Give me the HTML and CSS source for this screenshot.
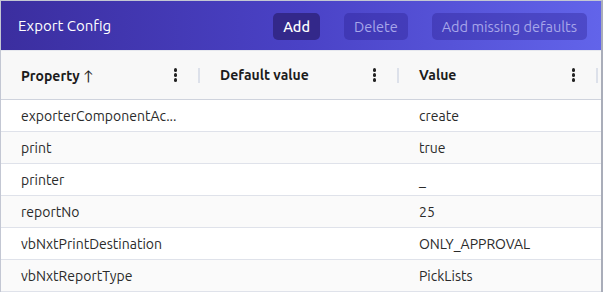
FILE: index.html
```html
<!DOCTYPE html>
<html>
<head>
<meta charset="utf-8">
<link rel="stylesheet" href="styles.css">
</head>
<body>
<div class="panel">
  <div class="toolbar">
    <div class="title">Export Config</div>
    <div class="actions">
      <button class="btn btn-primary">Add</button>
      <button class="btn btn-disabled">Delete</button>
      <button class="btn btn-disabled">Add missing defaults</button>
    </div>
  </div>
  <div class="grid">
    <div class="head-row">
      <div class="hcell"><span class="hlabel">Property <span class="arrow">↑</span></span><span class="kebab"><i></i><i></i><i></i></span><span class="sep"></span></div>
      <div class="hcell"><span class="hlabel">Default value</span><span class="kebab"><i></i><i></i><i></i></span><span class="sep"></span></div>
      <div class="hcell"><span class="hlabel">Value</span><span class="kebab"><i></i><i></i><i></i></span><span class="sep"></span></div>
    </div>
    <div class="row"><div class="cell">exporterComponentAc...</div><div class="cell"></div><div class="cell">create</div></div>
    <div class="row alt"><div class="cell">print</div><div class="cell"></div><div class="cell">true</div></div>
    <div class="row"><div class="cell">printer</div><div class="cell"></div><div class="cell">_</div></div>
    <div class="row alt"><div class="cell">reportNo</div><div class="cell"></div><div class="cell">25</div></div>
    <div class="row"><div class="cell">vbNxtPrintDestination</div><div class="cell"></div><div class="cell">ONLY_APPROVAL</div></div>
    <div class="row alt"><div class="cell">vbNxtReportType</div><div class="cell"></div><div class="cell">PickLists</div></div>
  </div>
</div>
</body>
</html>
```
FILE: styles.css
```css
* { box-sizing: border-box; }
html, body { margin: 0; padding: 0; background: #ffffff; }
body {
  font-family: "Ubuntu", "Lato", "Noto Sans", sans-serif;
  width: 605px;
  height: 297px;
  overflow: hidden;
}
.panel {
  width: 603px;
  border-top: 1px solid #c3c7d3;
  border-left: 1px solid #c3c7d3;
  border-right: 2px solid #a9adb9;
}
.toolbar {
  height: 49px;
  display: flex;
  align-items: center;
  justify-content: space-between;
  padding: 0 14px 0 17px;
  background: linear-gradient(90deg, #3b2e9f 0%, #4a42c6 50%, #6264ea 100%);
}
.title {
  color: #ffffff;
  font-size: 15px;
}
.actions {
  display: flex;
  gap: 24px;
  margin-top: 2px;
}
.btn {
  font-family: inherit;
  font-size: 14.5px;
  height: 27px;
  border: none;
  border-radius: 5px;
  padding: 0 10px;
  line-height: 27px;
}
.btn-primary {
  background: #33288a;
  color: #ffffff;
  font-weight: 500;
}
.btn-disabled {
  background: rgba(40, 30, 140, 0.35);
  color: #a7a6ea;
}
.grid {
  border-top: 1px solid #e6e8ee;
}
.head-row {
  height: 49px;
  display: flex;
  background: #f8f8f8;
  border-bottom: 1px solid #cfd3dd;
}
.hcell {
  width: 199px;
  display: flex;
  align-items: center;
  padding-left: 20px;
  position: relative;
}
.hlabel {
  flex: 1;
  font-size: 14px;
  font-weight: 700;
  color: #1c1c1c;
}
.arrow { font-weight: 400; }
.kebab {
  display: flex;
  flex-direction: column;
  gap: 1.5px;
  margin-right: 21px;
}
.kebab i {
  display: block;
  width: 3.5px;
  height: 3.5px;
  border-radius: 50%;
  background: #222;
}
.sep {
  width: 2px;
  height: 15px;
  background: #dde1ea;
}
.row {
  height: 32px;
  display: flex;
  border-bottom: 1px solid #dfe2ea;
  background: #ffffff;
}
.row.alt { background: #fafafa; }
.cell {
  width: 199px;
  padding-left: 20px;
  display: flex;
  align-items: center;
  font-size: 14px;
  color: #2a2a2a;
}
```
